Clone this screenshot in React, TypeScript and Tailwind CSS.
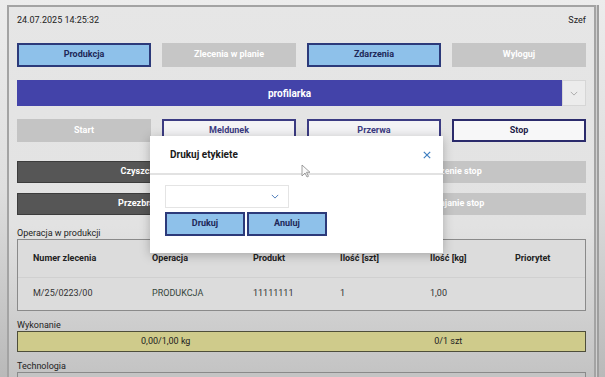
import React from "react";

const font = { fontFamily: "Roboto, 'Liberation Sans', sans-serif" };

function Chevron({ className }: { className?: string }) {
  return (
    <svg viewBox="0 0 10 6" className={className} fill="none" stroke="currentColor" strokeWidth="1.2">
      <path d="M1 1l4 4 4-4" />
    </svg>
  );
}

export default function App() {
  return (
    <div
      className="relative w-[605px] h-[377px] overflow-hidden bg-gradient-to-b from-[#ececec] via-[#dedede] to-[#b9b9b9] text-[#222]"
      style={font}
    >
      <div className="ml-[7px] mr-[9px] mt-[5px] h-[400px] border-2 border-b-0 border-[#a3a3a3] bg-gradient-to-b from-[#e6e6e6] via-[#e2e2e2] via-55% to-[#bdbdbd] px-[8px] shadow-[1px_0_0_#d0d0d0,3px_0_0_#9e9e9e]">
        {/* top line */}
        <div className="flex h-[26px] items-center justify-between text-[9px] leading-none">
          <span>24.07.2025 14:25:32</span>
          <span>Szef</span>
        </div>

        {/* row 1 */}
        <div className="mt-[10px] grid h-[24px] grid-cols-4 gap-[11px] text-[9px] font-bold">
          <div className="flex items-center justify-center border-2 border-[#2c3a7a] bg-[#8ec1ea] text-[#1d2858]">Produkcja</div>
          <div className="flex items-center justify-center bg-[#c6c6c6] text-white">Zlecenia w planie</div>
          <div className="flex items-center justify-center border-2 border-[#2c3a7a] bg-[#8ec1ea] text-[#1d2858]">Zdarzenia</div>
          <div className="flex items-center justify-center bg-[#c6c6c6] text-white">Wyloguj</div>
        </div>

        {/* profilarka */}
        <div className="mt-[13px] flex h-[26px]">
          <div className="flex flex-1 items-center justify-center bg-[#4343a9] text-[10px] font-bold text-white">profilarka</div>
          <div className="flex w-[24px] items-center justify-center border border-[#d6d6d6] bg-[#ececec] text-[#aaa]">
            <Chevron className="w-[8px] h-[5px]" />
          </div>
        </div>

        {/* row 3 */}
        <div className="mt-[13px] grid h-[23px] grid-cols-4 gap-[11px] text-[9px] font-bold">
          <div className="flex items-center justify-center bg-[#c4c4c4] text-white">Start</div>
          <div className="flex items-center justify-center border-2 border-[#3b3b82] bg-[#f3f3f5] text-[#3b3b82]">Meldunek</div>
          <div className="flex items-center justify-center border-2 border-[#3b3b82] bg-[#f3f3f5] text-[#3b3b82]">Przerwa</div>
          <div className="flex items-center justify-center border-2 border-[#2b2b6c] bg-[#f7f7f8] text-[#1e1e4a]">Stop</div>
        </div>

        {/* row 4 */}
        <div className="mt-[19px] grid h-[22px] grid-cols-2 gap-[11px] text-[9px] font-bold text-white">
          <div className="flex items-center justify-center border border-[#3c3c3c] bg-[#565656]">Czyszczenie start</div>
          <div className="flex items-center justify-center bg-[#c5c5c5]">Czyszczenie stop</div>
        </div>
        {/* row 5 */}
        <div className="mt-[10px] grid h-[22px] grid-cols-2 gap-[11px] text-[9px] font-bold text-white">
          <div className="flex items-center justify-center border border-[#3c3c3c] bg-[#565656]">Przezbrajanie start</div>
          <div className="flex items-center justify-center bg-[#c5c5c5]">Przezbrajanie stop</div>
        </div>

        {/* table */}
        <div className="mt-[13px] h-[11px] text-[9px] leading-[11px]">Operacja w produkcji</div>
        <div className="h-[72px] border border-[#8a8a8a] bg-[#dcdcdc] text-[9px]">
          <div className="grid h-[38px] grid-cols-[119px_101px_87px_90px_85px_1fr] items-center border-b border-[#d0d0d0] pl-[15px] font-bold">
            <span>Numer zlecenia</span>
            <span>Operacja</span>
            <span>Produkt</span>
            <span>Ilość [szt]</span>
            <span>Ilość [kg]</span>
            <span>Priorytet</span>
          </div>
          <div className="grid h-[32px] grid-cols-[119px_101px_87px_90px_85px_1fr] items-center pl-[15px] text-[#333]">
            <span>M/25/0223/00</span>
            <span className="text-[#34453a]">PRODUKCJA</span>
            <span>11111111</span>
            <span>1</span>
            <span>1,00</span>
            <span></span>
          </div>
        </div>

        {/* wykonanie */}
        <div className="mt-[8px] h-[12px] text-[9px] leading-[12px]">Wykonanie</div>
        <div className="grid h-[21px] grid-cols-2 border border-[#4e4e3a] bg-[#cfcb8b] text-[9px]">
          <div className="flex items-center justify-center pl-[12px]">0,00/1,00 kg</div>
          <div className="flex items-center justify-center pl-[10px]">0/1 szt</div>
        </div>

        <div className="mt-[9px] h-[11px] text-[9px] leading-[11px]">Technologia</div>
        <div className="h-[40px] border border-[#8a8a8a] bg-[#c4c4c4]"></div>
      </div>

      {/* modal */}
      <div className="absolute left-[150px] top-[136px] w-[293px] h-[117px] bg-white shadow-[0_2px_10px_rgba(0,0,0,0.25)]">
        <div className="flex h-[39px] items-center justify-between border-b-2 border-[#e2e2e2] pl-[20px] pr-[12px]">
          <span className="text-[10px] font-bold text-[#1a1a1a]">Drukuj etykiete</span>
          <svg viewBox="0 0 10 10" className="w-[8px] h-[8px] text-[#3f7fc1]" stroke="currentColor" strokeWidth="1.5">
            <path d="M1 1l8 8M9 1l-8 8" />
          </svg>
        </div>
        <div className="pl-[15px] pt-[10px]">
          <div className="flex h-[23px] w-[124px] items-center justify-end border border-[#e4e4e4] bg-white pr-[9px] text-[#4a7ab8]">
            <Chevron className="w-[8px] h-[5px]" />
          </div>
          <div className="mt-[4px] flex gap-[2px] text-[9px] font-bold text-[#1d2858]">
            <div className="flex h-[24px] w-[80px] items-center justify-center border-2 border-[#2c3a7a] bg-[#8ec1ea]">Drukuj</div>
            <div className="flex h-[24px] w-[80px] items-center justify-center border-2 border-[#2c3a7a] bg-[#8ec1ea]">Anuluj</div>
          </div>
        </div>
      </div>

      {/* cursor */}
      <svg className="absolute left-[301px] top-[164px] w-[10px] h-[14px]" viewBox="0 0 10 14">
        <path d="M1 1v11l3-3 2 4 1.5-.7-2-4H9z" fill="#fafafa" stroke="#888" strokeWidth="0.8" />
      </svg>
    </div>
  );
}
